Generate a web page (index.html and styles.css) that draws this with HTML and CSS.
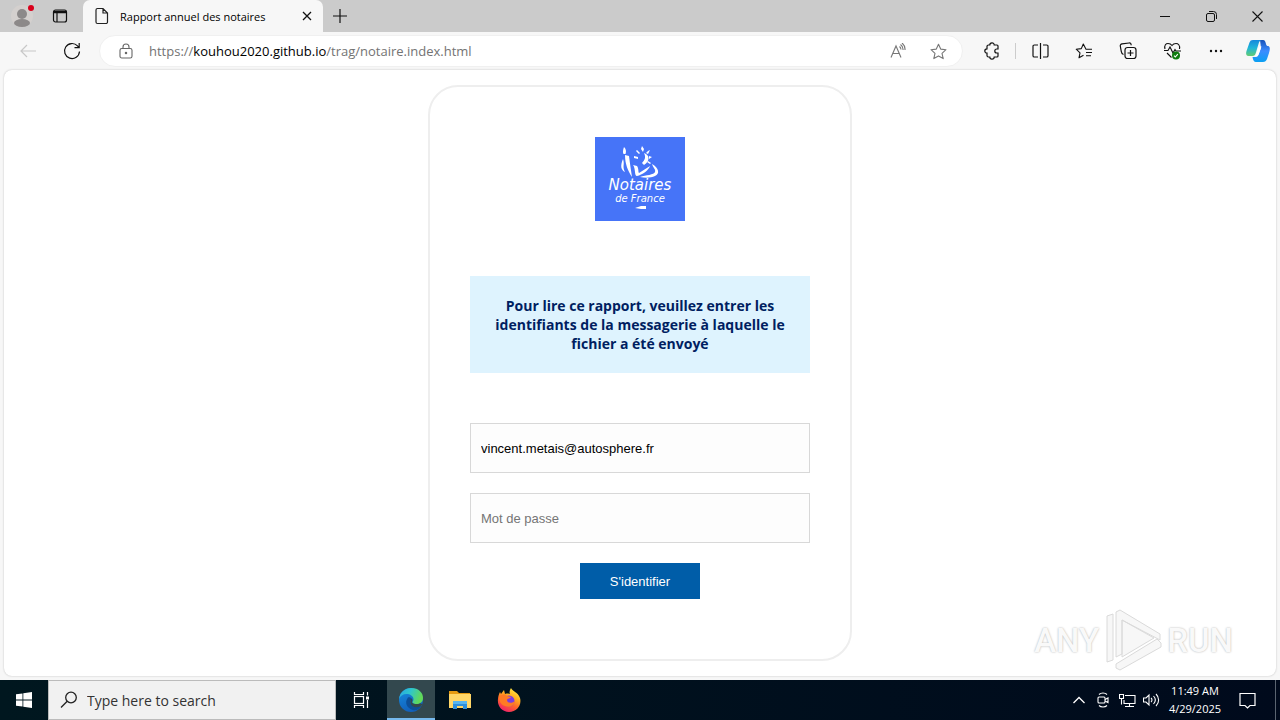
FILE: index.html
```html
<!DOCTYPE html>
<html lang="fr">
<head>
<meta charset="utf-8">
<title>Rapport annuel des notaires</title>
<link rel="stylesheet" href="styles.css">
</head>
<body>
<header class="tabstrip">
  <button class="profile" aria-label="Profile">
    <svg width="24" height="26" viewBox="0 0 24 26"><circle cx="12" cy="13" r="11" fill="#d4d0ce"/><circle cx="12" cy="11" r="5" fill="#8c8989"/><ellipse cx="12" cy="20" rx="8" ry="4" fill="#8c8989"/><circle cx="21" cy="5" r="3" fill="#d9001b"/></svg>
  </button>
  <button class="workspace" aria-label="Tab actions">
    <svg width="16" height="16" viewBox="0 0 16 16" fill="none" stroke="#111" stroke-width="1.2"><rect x="1.5" y="2" width="13" height="12" rx="2"/><path d="M2 3.5h12M2 4.5h12" stroke-width="1.6"/><path d="M5 4v10"/></svg>
  </button>
  <div class="tab">
    <svg width="14" height="18" viewBox="0 0 14 18" fill="none" stroke="#222" stroke-width="1.2"><path d="M2.5 1.5h5.500l4.500 4.500v9a1.500 1.500 0 0 1-1.500 1.500h-8.500a1.500 1.500 0 0 1-1.500-1.500v-12a1.500 1.500 0 0 1 1.500-1.500zM8 1.500v4.500h4.500"/></svg>
    <span class="tab-title">Rapport annuel des notaires</span>
    <button class="tab-close" aria-label="Close tab"><svg width="10" height="10" viewBox="0 0 10 10" stroke="#111" stroke-width="1.3"><path d="M1 1l8 8M9 1l-8 8"/></svg></button>
  </div>
  <button class="new-tab" aria-label="New tab"><svg width="14" height="14" viewBox="0 0 14 14" stroke="#111" stroke-width="1.2"><path d="M7 0v14M0 7h14"/></svg></button>
  <div class="window-controls">
    <button aria-label="Minimize"><svg width="10" height="10" viewBox="0 0 10 10" stroke="#111"><path d="M0 5.500h10"/></svg></button>
    <button aria-label="Restore"><svg width="11" height="11" viewBox="0 0 11 11" fill="none" stroke="#111"><rect x=".5" y="2.500" width="8" height="8" rx="1.500"/><path d="M3 .5h4.500a3 3 0 0 1 3 3v4.500"/></svg></button>
    <button aria-label="Close"><svg width="11" height="11" viewBox="0 0 11 11" stroke="#111" stroke-width="1.1"><path d="M.5 .5l10 10M10.500 .5l-10 10"/></svg></button>
  </div>
</header>

<nav class="toolbar">
  <button class="tool" aria-label="Back"><svg width="16" height="14" viewBox="0 0 16 14" fill="none" stroke="#c8c8c8" stroke-width="1.2"><path d="M16 7H1M7 1L1 7l6 6"/></svg></button>
  <button class="tool" aria-label="Refresh"><svg width="18" height="18" viewBox="0 0 18 18" fill="none" stroke="#111" stroke-width="1.2"><path d="M16.500 9.500A7.500 7.500 0 1 1 14.500 3.900L16 5.500M16.200 1v4.700h-4.700"/></svg></button>
  <div class="address">
    <svg class="lock" width="14" height="16" viewBox="0 0 14 16" fill="none" stroke="#666" stroke-width="1.1"><rect x="1" y="5.500" width="12" height="9.500" rx="1.800"/><path d="M4 5.500V4a3 3 0 0 1 6 0v1.500"/><circle cx="7" cy="10" r=".7" fill="#666"/></svg>
    <div class="url" role="textbox" aria-label="Address">https://<span class="host">kouhou2020.github.io</span>/trag/notaire.index.html</div>
    <button class="pill-tool" aria-label="Read aloud"><svg width="18" height="16" viewBox="0 0 18 16" fill="none" stroke="#777" stroke-width="1.1"><path d="M2 14.500L7 3l5 11.500M3.700 10.500h6.600M10.500 3.500a4 4 0 0 1 1.500 3M11.500 1.500a6 6 0 0 1 2.500 5.500M13 0a8 8 0 0 1 3 7"/></svg></button>
    <button class="pill-tool" aria-label="Add to favorites"><svg width="17" height="17" viewBox="0 0 17 17" fill="none" stroke="#777" stroke-width="1.1" stroke-linejoin="round"><path d="M8.500 1.200l2.200 4.900 5.300.6-4 3.600 1.200 5.300-4.700-2.700-4.700 2.700 1.200-5.300-4-3.600 5.300-.6z"/></svg></button>
  </div>
  <button class="tool" aria-label="Extensions"><svg width="17" height="18" viewBox="0 0 17 18" fill="none" stroke="#111" stroke-width="1.2"><path d="M5.500 3h1.300a2.200 2.200 0 0 1 4.400 0H14a1 1 0 0 1 1 1v3h-1.200a2 2 0 0 0 0 4H15v3a1 1 0 0 1-1 1h-2.800a2.200 2.200 0 0 1-4.400 0H5.500a1.500 1.500 0 0 1-1.500-1.500V11.200a2.200 2.200 0 0 1 0-4.400V4.500A1.500 1.500 0 0 1 5.500 3z"/></svg></button>
  <span class="divider"></span>
  <button class="tool" aria-label="Split screen"><svg width="17" height="16" viewBox="0 0 17 16" fill="none" stroke="#111" stroke-width="1.2"><path d="M6 2H2.300A1.300 1.300 0 0 0 1 3.300v9.400A1.300 1.300 0 0 0 2.300 14H6M11 2h3.700a1.300 1.300 0 0 1 1.300 1.300v9.400a1.300 1.300 0 0 1-1.300 1.300H11M8.500 0v16"/></svg></button>
  <button class="tool" aria-label="Favorites"><svg width="18" height="16" viewBox="0 0 18 16" fill="none" stroke="#111" stroke-width="1.1" stroke-linejoin="round"><path d="M17 6.200h-6L8.300 1 6.300 5.600 1.200 6.200 5 9.800 4 14.800l4.500-2.500M11 9.500h6M11 12.700h5"/></svg></button>
  <button class="tool" aria-label="Collections"><svg width="18" height="18" viewBox="0 0 18 18" fill="none" stroke="#111" stroke-width="1.2"><rect x="6" y="5.500" width="11" height="11" rx="2.500"/><path d="M11.500 8v6M8.500 11h6M4.500 12.500C2.500 12 2.500 11 2.200 9L1.300 4.200C1 2.800 2 2 3 1.800L10 1c1.500-.2 2 .6 2.200 2.200"/></svg></button>
  <button class="tool" aria-label="Browser essentials"><svg width="19" height="18" viewBox="0 0 19 18" fill="none" stroke="#111" stroke-width="1.1"><path d="M2 7C1 3 3 1.500 5 1.500c2 0 3.300 1 4 2 .7-1 2-2 4-2s4.200 1.500 3.500 5.500M1 8.500h4L7 5l3 6 2-3.500 1 1.500h5M4 11l4.500 4.500"/><circle cx="13" cy="13.500" r="4" fill="#107c10" stroke="none"/><path d="M11 13.700l1.300 1.300 2.500-2.800" stroke="#fff"/></svg></button>
  <button class="tool" aria-label="Settings and more"><svg width="14" height="4" viewBox="0 0 14 4" fill="#111"><circle cx="2" cy="2" r="1.200"/><circle cx="7" cy="2" r="1.200"/><circle cx="12" cy="2" r="1.200"/></svg></button>
  <button class="tool copilot" aria-label="Copilot"><svg width="24" height="22" viewBox="0 0 24 22">
    <defs><linearGradient id="ca" x1="0" y1="0" x2="0" y2="1"><stop offset="0" stop-color="#1588dc"/><stop offset=".5" stop-color="#20b6d9"/><stop offset="1" stop-color="#63cc72"/></linearGradient><linearGradient id="cb" x1="0" y1="0" x2="0" y2="1"><stop offset="0" stop-color="#1750b8"/><stop offset=".5" stop-color="#3d8cff"/><stop offset="1" stop-color="#0aa0f2"/></linearGradient></defs>
    <path d="M14 0h3c2 0 2.500 2 3 4 .3 1.500 1 2 2 2 2.500.5 2 4 1 7l-2 6c-.8 2-2 3-4 3h-7c-2 0-3-2-3.500-5h3.500c1.500 0 2-1 2.500-2.500L15 8z" fill="url(#cb)"/>
    <path d="M7 0h9c-2 0-3 2-3.500 4l-2.700 9c-.6 2-1.300 3-3.300 3H2.500C0 16-.3 13.500.5 11l3-8.500C4.200.8 5 0 7 0z" fill="url(#ca)"/>
    <path d="M13 6.500h2.500L12.800 14c-.6 1.500-1.300 2-3.300 2z" fill="#fff"/></svg></button>
</nav>

<main class="viewport">
  <form class="card">
    <svg class="logo" width="90" height="84" viewBox="0 0 90 84" role="img" aria-label="Notaires de France">
      <rect width="90" height="84" fill="#4674f8"/>
      <g fill="#fff"><path d="M29 10c2 2 2.500 4 1.500 7h-2c-1-2-.5-4 .5-7zM30 18l4 1c1 8 2 14 3 21-4-6-7-13-7-22zM28 22c2 6-1 7 2 13-4-2-5-6-2-13zM38 28l4 1c2 3 1 6 2 7l11-7c-1 4-8 9-13 10-3 0-1-7-4-11zM57 27c7 4 8 10 3 12-4 2-10 2-15 1 6-2 14-2 15-5 1-3-2-4-3-8zM49 16c6 2 6 8 0 12l-2-2c3-3 4-6 2-10z"/><path d="M47 9l2 3-1 3-2-3zM42 13l3 3-1 1-3-3zM53 14l2-1-2 4-2-1zM39 19l4 1v2l-4-1zM54 19l3 1-3 2zM53 24l3 2-1 1-3-2z"/><path d="M40 71l6-2h5v3h-5z"/></g>
      <text class="logo-name" x="45" y="53">Notaires</text><text class="logo-sub" x="45" y="65">de France</text>
    </svg>
    <p class="notice">Pour lire ce rapport, veuillez entrer les identifiants de la messagerie à laquelle le fichier a été envoyé</p>
    <input class="field" type="email" value="vincent.metais@autosphere.fr" aria-label="Adresse e-mail">
    <input class="field" type="password" placeholder="Mot de passe" aria-label="Mot de passe">
    <button class="submit" type="button">S'identifier</button>
  </form>
  <div class="watermark">
    <span>ANY</span>
    <svg width="60" height="66" viewBox="0 0 60 66" stroke-linejoin="round" fill="#f7f7f7" stroke="#dadada"><path d="M4 9l6-2v46l-6 2zM13 5l4-2 40 24v6L19 13v34l-6 3zM19 13l32 18-32 19zM13 57l41-25 4 4v4L17 63l-4-2z"/></svg>
    <span>RUN</span>
  </div>
</main>

<footer class="taskbar">
  <button class="start" aria-label="Start"><svg width="16" height="16" viewBox="0 0 16 16" fill="#fff"><path d="M0 2.300L6.500 1.400v6.200H0zM7.300 1.300L16 0v7.600H7.300zM0 8.400h6.500v6.200L0 13.700zM7.300 8.400H16V16l-8.700-1.300z"/></svg></button>
  <label class="search">
    <svg width="18" height="18" viewBox="0 0 18 18" fill="none" stroke="#222" stroke-width="1.300"><circle cx="11" cy="6.500" r="5.300"/><path d="M7.200 10.300L1 16.500"/></svg>
    <input type="text" placeholder="Type here to search" aria-label="Search">
  </label>
  <div class="apps">
    <button class="taskview" aria-label="Task View"><svg width="17" height="16" viewBox="0 0 17 16" fill="none" stroke="#fff" stroke-width="1.200"><rect x="1.500" y="4.500" width="9" height="7"/><path d="M1.500 0v2.500h9V0M1.500 16v-2.500h9V16M14.500 0v3.500M14.500 8v8"/><path d="M13 4.500h3v3h-3z" fill="#fff" stroke="none"/></svg></button>
    <button class="app active" aria-label="Edge"><svg width="24" height="24" viewBox="0 0 24 24">
      <defs><linearGradient id="ea" x1="0" y1="0" x2="1" y2=".3"><stop offset="0" stop-color="#27a4e5"/><stop offset=".5" stop-color="#2fc6cc"/><stop offset="1" stop-color="#62d957"/></linearGradient><linearGradient id="eb" x1="0" y1="0" x2=".4" y2="1"><stop offset="0" stop-color="#168de0"/><stop offset="1" stop-color="#1260bb"/></linearGradient></defs>
      <circle cx="12" cy="12" r="12" fill="url(#eb)"/><path d="M0 11C1 4 6 0 12 0c8 0 12 5 12 10 0 4-3 6-6.500 6-2.500 0-4-.8-4-1.800 0-.8 1-1.200 1-3C14.500 8 11 6 7.500 6 4 6 1 8 0 11z" fill="url(#ea)"/><path d="M9 9.500c-4 5-1 11 5 12.500 3 .7 6-.5 8.500-4-5 2-10 .5-11-3-.5-2 .5-3.500 1.500-4-1-1.500-2.500-2-4-1.500z" fill="#0d4f98"/><path d="M12.500 10.500c2.300 2-.5 3 1 4.500 1.500 1.300 5 1.500 8 .2l2 1.300-2 2c-5 1.500-9 .5-10-3-.5-2 0-4 1-5z" fill="#33484e"/></svg></button>
    <button class="app" aria-label="File Explorer"><svg width="22" height="18" viewBox="0 0 22 18"><path d="M0 0h8l2 2h11v4H0z" fill="#e69b12"/><path d="M0 3h22v14H0z" fill="#ffd667"/><path d="M4 10h14v8h-4v-3H8v3H4z" fill="#2c8edb"/><path d="M4 10h14v3H4z" fill="#55b4ef"/></svg></button>
    <button class="app" aria-label="Firefox"><svg width="24" height="24" viewBox="0 0 24 24"><defs><linearGradient id="fa" x1=".8" y1="0" x2=".3" y2="1"><stop offset="0" stop-color="#fff04a"/><stop offset=".35" stop-color="#ffb01f"/><stop offset=".65" stop-color="#ff622c"/><stop offset="1" stop-color="#f0206c"/></linearGradient></defs><path d="M14 0c1 3 7 4 9 10 2 7-3 14-11 14C5 24 0 18 1 11c.2-3 1-5 2-7l1 2 3-4 1 4c3-1 4 0 5 0-1-2 0-4 1-6z" fill="url(#fa)"/><circle cx="12" cy="13" r="5.500" fill="#7a3de0"/><path d="M2 9c3-3 6-3 8-1l4 1c-1 2-4 1-4 3 0 3 5 4 8 1-1 5-6 7-10 5-4-1-6-5-6-9z" fill="#ff7b24"/></svg></button>
  </div>
  <div class="tray">
    <button aria-label="Show hidden icons"><svg width="12" height="8" viewBox="0 0 12 8" fill="none" stroke="#fff" stroke-width="1.300"><path d="M.5 7L6 1.500 11.500 7"/></svg></button>
    <button aria-label="Meet now"><svg width="14" height="16" viewBox="0 0 14 16" fill="none" stroke="#fff" stroke-width="1.100"><rect x="2" y="5" width="7" height="6" rx="1"/><path d="M9 7.500l3-1.500v4.500L9 9M3 2.500c2-2 6-2 8 0M3 13.500c2 2 6 2 8 0"/></svg></button>
    <button aria-label="Network"><svg width="17" height="15" viewBox="0 0 17 15" fill="none" stroke="#fff" stroke-width="1.100"><path d="M6 2.500h10v8H5V7M10.500 10.500v3M6 13.500h9M.5 1.500h4v4h-4zM2.500 5.500v6"/></svg></button>
    <button aria-label="Volume"><svg width="17" height="14" viewBox="0 0 17 14" fill="none" stroke="#fff" stroke-width="1.100"><path d="M.5 5h2.500L6 2v10L3 9H.5zM8 5c1.300 1 1.300 3 0 4M10.500 3c2.300 2.500 2.300 5.500 0 8M13 1c3.500 3.500 3.500 8.500 0 12"/></svg></button>
    <time class="clock"><span>11:49 AM</span><span>4/29/2025</span></time>
    <button class="notify" aria-label="Notifications"><svg width="17" height="17" viewBox="0 0 17 17" fill="none" stroke="#fff" stroke-width="1.200"><path d="M1 1.500h15v12h-5L8.500 16 6 13.500H1z"/></svg></button>
    <span class="show-desktop"></span>
  </div>
</footer>
</body>
</html>
```

FILE: styles.css
```css
* { box-sizing: border-box; }
body {
  margin: 0;
  height: 100vh;
  display: flex;
  flex-direction: column;
  background: #f7f7f7;
  font-family: "Open Sans", "Noto Sans", sans-serif;
  color: #000;
  overflow: hidden;
}
button {
  border: 0;
  padding: 0;
  background: none;
  display: flex;
  align-items: center;
  justify-content: center;
  flex-shrink: 0;
}
svg { flex-shrink: 0; }

.tabstrip {
  display: flex;
  height: 32px;
  flex-shrink: 0;
  background: #cbcbcb;
}
.profile { width: 44px; }
.workspace { width: 32px; }
.tab {
  display: flex;
  align-items: center;
  width: 240px;
  margin-left: 7px;
  padding: 0 8px 0 12px;
  gap: 11px;
  background: #f7f7f7;
  border-radius: 7px 7px 0 0;
}
.tab-title { flex: 1; font-size: 11px; white-space: nowrap; }
.tab-close { width: 16px; height: 16px; }
.new-tab { width: 34px; }
.window-controls { display: flex; margin-left: auto; }
.window-controls button { width: 46px; }

.toolbar {
  display: flex;
  align-items: center;
  height: 38px;
  flex-shrink: 0;
  padding: 0 2px 0 6px;
}
.tool { width: 44px; height: 30px; }
.copilot { width: 40px; }
.divider { width: 1px; height: 16px; margin: 0 2px; background: #ccc; }
.address {
  flex: 1;
  display: flex;
  align-items: center;
  height: 32px;
  margin: 0 6px 0 5px;
  padding: 0 4px 0 19px;
  border: 1px solid #f0f0f0;
  border-radius: 16px;
  background: #fff;
}
.url {
  flex: 1;
  margin-left: 16px;
  font-size: 13px;
  color: #737373;
  white-space: nowrap;
}
.host { color: #000; }
.pill-tool { width: 40px; height: 28px; }

.viewport {
  flex: 1;
  min-height: 0;
  position: relative;
  display: flex;
  flex-direction: column;
  align-items: center;
  margin: 0 4px 4px;
  padding-top: 15px;
  border-radius: 8px;
  background: #fff;
  box-shadow: 0 0 2px #bbb;
}
.card {
  display: flex;
  flex-direction: column;
  align-items: center;
  width: 100%;
  max-width: 424px;
  padding: 50px 40px 60px;
  border: 2px solid #eee;
  border-radius: 30px;
  font-family: "Liberation Sans", Arial, sans-serif;
}
.logo-name, .logo-sub {
  font-family: "DejaVu Sans", sans-serif;
  font-style: italic;
  text-anchor: middle;
  fill: #fff;
}
.logo-name { font-size: 15px; }
.logo-sub { font-size: 10px; }
.notice {
  width: 100%;
  margin: 55px 0 50px;
  padding: 20px;
  background: #def3fe;
  color: #001e61;
  font: bold 14px/19px "Open Sans", sans-serif;
  text-align: center;
}
.field {
  width: 100%;
  height: 50px;
  margin-bottom: 20px;
  padding: 0 10px;
  border: 1px solid #d8d8d8;
  background: #fdfdfd;
  color: #000;
  font: 13px "Liberation Sans", Arial, sans-serif;
}
.field::placeholder { color: #757575; }
.submit {
  padding: 0 30px;
  height: 36px;
  background: #005da8;
  color: #fff;
  font: 13px "Liberation Sans", Arial, sans-serif;
}
.watermark {
  position: absolute;
  right: 43px;
  bottom: 3px;
  display: flex;
  align-items: center;
  gap: 4px;
  font: 500 33px Roboto, sans-serif;
  color: #f9f9f9;
  text-shadow: 0 0 2px #aaa;
}

.taskbar {
  display: flex;
  height: 40px;
  flex-shrink: 0;
  background: linear-gradient(90deg, #00171f, #000a1c);
  color: #fff;
}
.start { width: 48px; }
.search {
  display: flex;
  align-items: center;
  width: 288px;
  padding: 0 11px;
  gap: 9px;
  border: 1px solid #bbb;
  background: #f1f1f1;
}
.search input {
  flex: 1;
  min-width: 0;
  padding: 0;
  border: 0;
  background: none;
  font: 14px "Open Sans", sans-serif;
}
.search input::placeholder { color: #333; }
.apps { display: flex; gap: 1px; }
.taskview { width: 50px; }
.app { width: 48px; }
.active { background: #33484e; box-shadow: inset 0 -2px #76b9ed; }
.tray { display: flex; margin-left: auto; }
.tray button { width: 24px; }
.clock {
  display: flex;
  flex-direction: column;
  align-items: center;
  justify-content: center;
  width: 64px;
  font-size: 11px;
  line-height: 18px;
}
.tray .notify { width: 40px; }
.show-desktop { width: 5px; margin-left: 8px; border-left: 1px solid #5a6470; }
```
